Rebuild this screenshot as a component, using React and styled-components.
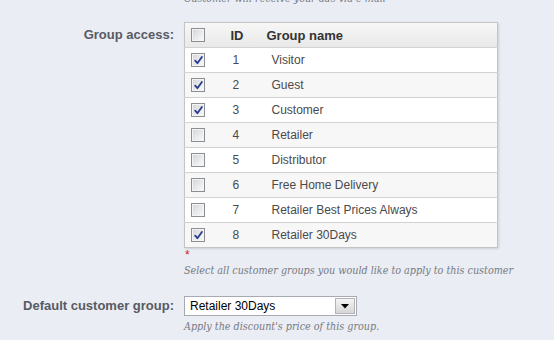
import React from "react";
import styled, { createGlobalStyle } from "styled-components";

const GlobalStyle = createGlobalStyle`
  html, body {
    margin: 0;
    padding: 0;
    background: #eaedf4;
    font-family: Arial, "Liberation Sans", sans-serif;
  }
  body { overflow: hidden; }
`;

const Form = styled.div`
  display: flex;
  flex-direction: column;
  width: 554px;
`;

const FieldRow = styled.div`
  display: flex;
  align-items: flex-start;
  margin-top: ${(p) => p.$top || 0}px;
`;

const Label = styled.div`
  width: 174px;
  flex: none;
  box-sizing: border-box;
  text-align: right;
  font-size: 13px;
  font-weight: bold;
  color: #585a63;
  line-height: ${(p) => p.$lh || 20}px;
`;

const Content = styled.div`
  margin-left: 10px;
  display: flex;
  flex-direction: column;
  align-items: flex-start;
`;

const Hint = styled.p`
  margin: ${(p) => p.$top || 0}px 0 0 0;
  font-family: "DejaVu Serif Condensed", "DejaVu Serif", serif;
  font-style: italic;
  font-size: 10.7px;
  line-height: 14px;
  color: #787a82;
`;

const Table = styled.table`
  border-collapse: collapse;
  width: 314px;
  border: 1px solid #c4c4c4;
  box-shadow: 1px 1px 2px rgba(0, 0, 0, 0.12);
  background: #fff;
`;

const HeadRow = styled.tr`
  height: 25px;
  background: linear-gradient(#f7f7f7, #e8e8e8);
`;

const Th = styled.th`
  text-align: left;
  font-size: 13px;
  font-weight: bold;
  color: #333;
  padding: 0 0 0 ${(p) => p.$pad || 0}px;
  width: ${(p) => (p.$w ? `${p.$w}px` : "auto")};
  box-sizing: border-box;
`;

const Row = styled.tr`
  height: 25px;
  background: ${(p) => (p.$alt ? "#f7f7f7" : "#ffffff")};
  border-top: 1px solid #d2d2d2;
`;

const Td = styled.td`
  font-size: 12px;
  color: #4a4a4a;
  padding: 0 0 0 ${(p) => p.$pad || 0}px;
  vertical-align: middle;
`;

const Box = styled.span`
  display: block;
  width: 14px;
  height: 14px;
  box-sizing: border-box;
  border: 1px solid #8c8e92;
  margin-left: 6px;
  position: relative;
  background: linear-gradient(135deg, #d2d4d8 0%, #eaecee 60%, #fbfbfb 100%);
  box-shadow: inset 0 0 0 1px #f4f4f4;
`;

const Check = styled.svg`
  position: absolute;
  left: 2px;
  top: 2px;
`;

const Checkbox = ({ checked }) => (
  <Box>
    {checked && (
      <Check width="9" height="9" viewBox="0 0 9 9">
        <path d="M1.2 4.6 L3.4 7.2 L7.9 1" fill="none" stroke="#2b3b8f" strokeWidth="1.8" strokeLinecap="round" strokeLinejoin="round" />
      </Check>
    )}
  </Box>
);

const Star = styled.div`
  color: #d02020;
  font-size: 12px;
  line-height: 14px;
  margin-left: 1px;
`;

const Select = styled.div`
  width: 173px;
  height: 20px;
  box-sizing: border-box;
  border: 1px solid #a7aab0;
  background: #fff;
  display: flex;
  align-items: center;
  justify-content: space-between;
  padding: 1px;
`;

const SelectText = styled.span`
  font-size: 12px;
  color: #000;
  padding-left: 4px;
`;

const ArrowBtn = styled.span`
  width: 20px;
  height: 16px;
  box-sizing: border-box;
  border: 1px solid #b3b3b3;
  background: linear-gradient(#f4f4f4, #d6d6d6);
  display: flex;
  align-items: center;
  justify-content: center;
`;

const groups = [
  { id: 1, name: "Visitor", checked: true },
  { id: 2, name: "Guest", checked: true },
  { id: 3, name: "Customer", checked: true },
  { id: 4, name: "Retailer", checked: false },
  { id: 5, name: "Distributor", checked: false },
  { id: 6, name: "Free Home Delivery", checked: false },
  { id: 7, name: "Retailer Best Prices Always", checked: false },
  { id: 8, name: "Retailer 30Days", checked: true },
];

export default function App() {
  return (
    <>
      <GlobalStyle />
      <Form>
        <FieldRow $top={-8}>
          <Label />
          <Content>
            <Hint>Customer will receive your ads via e-mail</Hint>
          </Content>
        </FieldRow>
        <FieldRow $top={16}>
          <Label $lh={25}>Group access:</Label>
          <Content>
            <Table>
              <thead>
                <HeadRow>
                  <Th $w={40}>
                    <Checkbox checked={false} />
                  </Th>
                  <Th $w={35} $pad={6}>ID</Th>
                  <Th $pad={7}>Group name</Th>
                </HeadRow>
              </thead>
              <tbody>
                {groups.map((g, i) => (
                  <Row key={g.id} $alt={i % 2 === 1}>
                    <Td>
                      <Checkbox checked={g.checked} />
                    </Td>
                    <Td $pad={8}>{g.id}</Td>
                    <Td $pad={12}>{g.name}</Td>
                  </Row>
                ))}
              </tbody>
            </Table>
            <Star>*</Star>
            <Hint $top={2}>Select all customer groups you would like to apply to this customer</Hint>
          </Content>
        </FieldRow>
        <FieldRow $top={18}>
          <Label $lh={20}>Default customer group:</Label>
          <Content>
            <Select>
              <SelectText>Retailer 30Days</SelectText>
              <ArrowBtn>
                <svg width="8" height="5" viewBox="0 0 8 5">
                  <path d="M0 0 H8 L4 4.5 Z" fill="#000" />
                </svg>
              </ArrowBtn>
            </Select>
            <Hint $top={4}>Apply the discount's price of this group.</Hint>
          </Content>
        </FieldRow>
      </Form>
    </>
  );
}
